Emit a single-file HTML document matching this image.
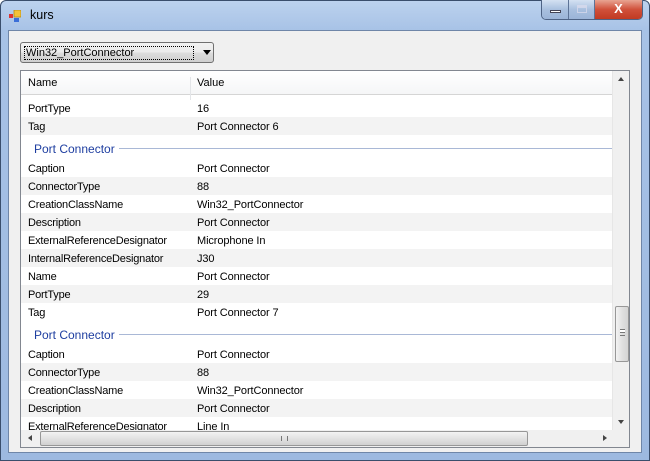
<!DOCTYPE html>
<html><head><style>
*{margin:0;padding:0;box-sizing:border-box}
body{width:650px;height:461px;overflow:hidden;background:#fff;font-family:"Liberation Sans",sans-serif;font-size:11px;color:#000;position:relative}
.frame{position:absolute;left:0;top:0;width:650px;height:461px;border-radius:6px 6px 0 0;background:linear-gradient(180deg,#bcd2ee 0,#a7c2e6 30px,#9db9e0 100%);border:1px solid #3a4e6c}
.client{position:absolute;left:8px;top:30px;width:634px;height:423px;background:#f0f0f0;border:1px solid #6f86a8}
.title{position:absolute;left:30px;top:8px;font-size:12.5px;color:#000}
.ico{position:absolute;left:9px;top:10px;width:12px;height:12px}
.btns{position:absolute;left:541px;top:0;height:20px;width:102px;border:1px solid #4e6385;border-top:none;border-radius:0 0 5px 5px;overflow:hidden;display:flex}
.b{height:19px;background:linear-gradient(#d4e1f2,#a9c0df 50%,#9bb4d8);border-right:1px solid #5d7397}
.bx{background:linear-gradient(#e8a492,#d0503a 50%,#c13a22);flex:1;color:#fff;font-weight:bold;text-align:center;font-size:13px;line-height:18px}
.combo{position:absolute;left:20px;top:42px;width:194px;height:21px;border:1px solid #707070;border-radius:3px;background:linear-gradient(#f2f2f2,#ebebeb 50%,#dddddd 51%,#cfcfcf)}
.combo span{position:absolute;left:3px;top:3px;height:14px;width:170px;border:1px dotted #000;line-height:13px;padding-left:1px}
.arrow{position:absolute;left:182px;top:7px;border-left:4px solid transparent;border-right:4px solid transparent;border-top:5px solid #000}
.lv{position:absolute;left:20px;top:70px;width:610px;height:378px;border:1px solid #828790;background:#fff;overflow:hidden}
.hdr{position:absolute;left:0;top:0;width:591px;height:24px;background:linear-gradient(#fff,#f5f6f7);border-bottom:1px solid #d5d5d5}
.hdr div{position:absolute;top:6px}
.sep{position:absolute;left:169px;top:0;width:1px;height:23px;background:#e3e5e8}
.row{position:absolute;left:0;width:591px;height:18px;line-height:20px}
.row.g{background:#f3f3f3}
.row .a{position:absolute;left:7px;letter-spacing:-0.2px}
.row .v{position:absolute;left:176px;letter-spacing:-0.1px}
.grp{position:absolute;left:0;width:591px;height:24px}
.grp span{position:absolute;left:13px;top:7px;color:#1e3ea0;font-size:12px;background:#fff;padding-right:4px}
.grp i{position:absolute;left:13px;right:0;top:13px;height:1px;background:#a9b8d6}
.vs{position:absolute;left:591px;top:0;width:17px;height:359px;background:#f0f0f0;border-left:1px solid #e6e6e6}
.hs{position:absolute;left:0;top:359px;width:591px;height:17px;background:#f0f0f0}
.corner{position:absolute;left:591px;top:359px;width:17px;height:17px;background:#f0f0f0}
.vt{position:absolute;left:2px;top:235px;width:14px;height:56px;border:1px solid #979797;border-radius:2px;background:linear-gradient(90deg,#f3f3f3,#e0e0e0 50%,#d4d4d4)}
.ht{position:absolute;left:19px;top:1px;width:488px;height:15px;border:1px solid #979797;border-radius:2px;background:linear-gradient(#f3f3f3,#e2e2e2 50%,#d0d0d0)}
</style></head><body>
<div class="frame"></div>
<svg class="ico" viewBox="0 0 12 12"><rect x="5" y="0" width="7" height="7" fill="#f3c338" stroke="#b88a10" stroke-width=".8"/><rect x="0" y="4" width="4" height="4" fill="#d33"/><rect x="5" y="8" width="5" height="4" fill="#3a6ed8"/></svg>
<div class="title">kurs</div>
<div class="btns"><div class="b" style="width:27px"><div style="margin:10px 0 0 8px;width:11px;height:3px;background:#fff;border:1px solid #445"></div></div><div class="b" style="width:26px"><div style="margin:5px 0 0 8px;width:10px;height:8px;border:1px solid #dde;border-top-width:3px;opacity:.7"></div></div><div class="bx">X</div></div>
<div class="client"></div>
<div class="combo"><span>Win32_PortConnector</span><div class="arrow"></div></div>
<div class="lv">
<div class="hdr"><div style="left:7px">Name</div><div class="sep"></div><div style="left:176px">Value</div></div>
<div class="row" style="top:28px"><span class="a">PortType</span><span class="v">16</span></div>
<div class="row g" style="top:46px"><span class="a">Tag</span><span class="v">Port Connector 6</span></div>
<div class="grp" style="top:64px"><i></i><span>Port Connector</span></div>
<div class="row" style="top:88px"><span class="a">Caption</span><span class="v">Port Connector</span></div>
<div class="row g" style="top:106px"><span class="a">ConnectorType</span><span class="v">88</span></div>
<div class="row" style="top:124px"><span class="a">CreationClassName</span><span class="v">Win32_PortConnector</span></div>
<div class="row g" style="top:142px"><span class="a">Description</span><span class="v">Port Connector</span></div>
<div class="row" style="top:160px"><span class="a">ExternalReferenceDesignator</span><span class="v">Microphone In</span></div>
<div class="row g" style="top:178px"><span class="a">InternalReferenceDesignator</span><span class="v">J30</span></div>
<div class="row" style="top:196px"><span class="a">Name</span><span class="v">Port Connector</span></div>
<div class="row g" style="top:214px"><span class="a">PortType</span><span class="v">29</span></div>
<div class="row" style="top:232px"><span class="a">Tag</span><span class="v">Port Connector 7</span></div>
<div class="grp" style="top:250px"><i></i><span>Port Connector</span></div>
<div class="row" style="top:274px"><span class="a">Caption</span><span class="v">Port Connector</span></div>
<div class="row g" style="top:292px"><span class="a">ConnectorType</span><span class="v">88</span></div>
<div class="row" style="top:310px"><span class="a">CreationClassName</span><span class="v">Win32_PortConnector</span></div>
<div class="row g" style="top:328px"><span class="a">Description</span><span class="v">Port Connector</span></div>
<div class="row" style="top:346px"><span class="a">ExternalReferenceDesignator</span><span class="v">Line In</span></div>
<div class="vs"><div style="position:absolute;left:5px;top:6px;border-left:3px solid transparent;border-right:3px solid transparent;border-bottom:4px solid #444"></div><div class="vt"><div style="margin:22px 0 0 4px;width:5px;height:7px;border-top:1px solid #777;border-bottom:1px solid #777;box-shadow:inset 0 2px 0 #fff,inset 0 3px 0 #777"></div></div><div style="position:absolute;left:5px;top:349px;border-left:3px solid transparent;border-right:3px solid transparent;border-top:4px solid #444"></div></div>
<div class="hs"><div style="position:absolute;left:7px;top:5px;border-top:3px solid transparent;border-bottom:3px solid transparent;border-right:4px solid #444"></div><div class="ht"><div style="margin:4px 0 0 240px;width:7px;height:5px;border-left:1px solid #777;border-right:1px solid #777"></div></div><div style="position:absolute;left:582px;top:5px;border-top:3px solid transparent;border-bottom:3px solid transparent;border-left:4px solid #444"></div></div>
<div class="corner"></div>
</div>
</body></html>
